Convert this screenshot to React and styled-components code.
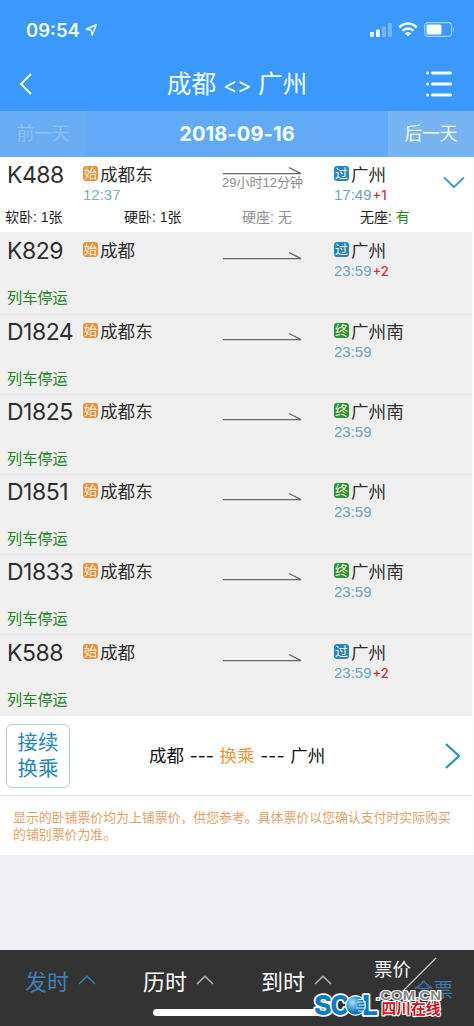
import React from "react";
import styled, { createGlobalStyle } from "styled-components";

const Global = createGlobalStyle`
  * { box-sizing: border-box; }
  body {
    margin: 0;
    background: #efeff4;
    font-family: "Liberation Sans", "Noto Sans CJK SC", sans-serif;
    color: #2e2e2e;
  }
`;

const Screen = styled.div`
  width: 474px;
  height: 1026px;
  display: flex;
  flex-direction: column;
  overflow: hidden;
  background: #efeff4;
  white-space: nowrap;
`;

const Header = styled.header`
  height: 111px;
  background: #3b98fc;
  color: #f1ffff;
`;

const StatusBar = styled.div`
  display: flex;
  align-items: center;
  height: 59px;
  padding: 0 19px 0 26px;
`;

const Clock = styled.span`
  font: 600 18.5px/24px Inter, sans-serif;
  width: 59px;
`;

const StatusIcons = styled.div`
  display: flex;
  align-items: center;
  gap: 6px;
  margin-left: auto;
`;

const NavBar = styled.div`
  display: grid;
  grid-template-columns: 60px 1fr 60px;
  align-items: center;
  height: 50px;
  svg { display: block; }
`;

const BackButton = styled.div`
  padding-left: 19px;
`;

const MenuButton = styled.div`
  padding-left: 12px;
`;

const Title = styled.h1`
  margin: 0;
  text-align: center;
  font: 400 24.7px/36px Inter, "Noto Sans CJK SC", sans-serif;
`;

const Arrows = styled.span`
  font-size: 22px;
  letter-spacing: -0.6px;
`;

const DateBar = styled.div`
  display: grid;
  grid-template-columns: 86px 1fr 86px;
  height: 46px;
  line-height: 47px;
  background: #62a9f6;
  text-align: center;
  color: #f4ffff;
`;

const DayButton = styled.div`
  font-size: 17.7px;
  background: ${(p) => (p.$off ? "#68adf4" : "#77b4f1")};
  color: ${(p) => (p.$off ? "#90c0f3" : "#effdff")};
`;

const CurrentDate = styled.div`
  font: 700 20px/47px Inter, sans-serif;
  letter-spacing: 0.1px;
`;

const List = styled.main`
  display: flex;
  flex-direction: column;
  padding-right: 2px;
  background: #fcfcfc;
`;

const TrainRow = styled.section`
  height: ${(p) => p.$h}px;
  padding-top: ${(p) => p.$top}px;
  background: ${(p) => (p.$open ? "#fff" : "#efefef")};
  border-bottom: 1px solid ${(p) => (p.$line ? "#e7e7e7" : "transparent")};
`;

const TrainMain = styled.div`
  display: grid;
  grid-template-columns: 76px 140px 111px 108px 1fr;
  padding-left: 7px;
  height: ${(p) => (p.$open ? 46 : 53)}px;
`;

const TrainNo = styled.div`
  font: 400 23px/34px Inter, sans-serif;
  letter-spacing: -0.5px;
`;

const Station = styled.div`
  display: flex;
  align-items: center;
  gap: 2px;
  height: 31px;
  font-size: 17.6px;
`;

const Badge = styled.span`
  width: 15px;
  height: 15px;
  border-radius: 3px;
  background: ${(p) => p.$color};
  color: #fff2dc;
  font-size: 13px;
  line-height: 15px;
  text-align: center;
`;

const Time = styled.div`
  margin-top: -3px;
  font-size: 15px;
  line-height: 17px;
  color: ${(p) => p.$tone};
`;

const PlusDay = styled.span`
  margin-left: 1px;
  font: 500 13px/12px Inter, sans-serif;
  color: #c9343f;
`;

const Route = styled.div`
  display: flex;
  flex-direction: column;
  align-items: flex-start;
  padding-top: ${(p) => (p.$open ? 8 : 17)}px;
  svg { display: block; }
`;

const Duration = styled.span`
  font-size: 13px;
  line-height: 15px;
  margin: 0 0 0 -1px;
  color: #8b8b8b;
`;

const Expand = styled.div`
  padding: 17px 0 0 1px;
`;

const Seats = styled.div`
  display: grid;
  grid-template-columns: 119px 118px 118px 1fr;
  padding-left: 5px;
  font-size: 14px;
  line-height: 27px;
  color: #222;
`;

const Seat = styled.span`
  color: ${(p) => (p.$none ? "#929292" : "#222")};
`;

const Available = styled.span`
  color: #268526;
`;

const Suspended = styled.div`
  padding-left: 7px;
  font-size: 15.2px;
  line-height: 22px;
  color: #258525;
`;

const TransferRow = styled.section`
  display: grid;
  grid-template-columns: 64px 1fr 27px;
  align-items: center;
  height: 80px;
  padding-left: 6px;
  background: #fff;
  border-bottom: 1px solid #e6e6e6;
`;

const TransferButton = styled.div`
  height: 64px;
  padding-top: 5px;
  border: 1px solid #b5cede;
  border-radius: 6px;
  font-size: 20.4px;
  line-height: 26px;
  text-align: center;
  color: #2787b7;
`;

const TransferRoute = styled.div`
  padding-left: 79px;
  font: 400 17.5px/26px Inter, "Noto Sans CJK SC", sans-serif;
  word-spacing: 0.8px;
  color: #111;
`;

const Orange = styled.span`
  color: #e49a43;
`;

const Note = styled.p`
  margin: 0;
  height: 59px;
  padding: 13px 0 0 13px;
  background: #fff;
  font-size: 12.88px;
  line-height: 17px;
  color: #dca36a;
`;

const SortBar = styled.footer`
  position: relative;
  display: grid;
  grid-template-columns: 118px 118px 118px 1fr;
  height: 76px;
  margin-top: auto;
  padding-left: 25px;
  background: #333;
`;

const SortItem = styled.div`
  display: flex;
  align-items: center;
  gap: 9px;
  height: 60px;
  font-size: 22px;
  color: ${(p) => (p.$active ? "#3f80b5" : "#fff")};
`;

const HomeIndicator = styled.div`
  position: absolute;
  left: 153px;
  bottom: 10px;
  width: 168px;
  height: 7px;
  border-radius: 4px;
  background: #fff;
`;

const PriceToggle = styled.div`
  position: relative;
  font-size: 18.5px;
  line-height: 24px;
  color: #f5f5f5;
`;

const PriceLabel = styled.span`
  position: absolute;
  left: -5px;
  top: 8px;
`;

const FullFare = styled.span`
  position: absolute;
  left: 35px;
  top: 28px;
  font-size: 19.5px;
  color: #3b78a9;
`;

const Slash = styled.svg`
  position: absolute;
  left: 23px;
  top: 7px;
`;

const Watermark = styled.svg`
  position: absolute;
  left: 309px;
  top: 34px;
`;

const ORANGE = "#e39243";
const BLUE = "#2686bf";
const GREEN = "#279436";

const trains = [
  { no: "K488", from: "成都东", dep: "12:37", pass: true, to: "广州", arr: "17:49", plus: "+1", open: true, h: 75, top: 1 },
  { no: "K829", from: "成都", pass: true, to: "广州", arr: "23:59", plus: "+2", h: 83, top: 2 },
  { no: "D1824", from: "成都东", to: "广州南", arr: "23:59", h: 80, top: 0 },
  { no: "D1825", from: "成都东", to: "广州南", arr: "23:59", h: 80, top: 0 },
  { no: "D1851", from: "成都东", to: "广州", arr: "23:59", h: 80, top: 0 },
  { no: "D1833", from: "成都东", to: "广州南", arr: "23:59", h: 80, top: 0 },
  { no: "K588", from: "成都", pass: true, to: "广州", arr: "23:59", plus: "+2", h: 81, top: 1, last: true },
];

const Caret = ({ color }) => (
  <svg width="18" height="10" viewBox="0 0 18 10" fill="none" stroke={color} strokeWidth="1.4">
    <path d="M1 9 9 1.2 17 9" />
  </svg>
);

function Train({ t }) {
  return (
    <TrainRow $h={t.h} $top={t.top} $open={t.open} $line={!t.last && !t.open}>
      <TrainMain $open={t.open}>
        <TrainNo>{t.no}</TrainNo>
        <div>
          <Station><Badge $color={ORANGE}>始</Badge>{t.from}</Station>
          {t.dep && <Time $tone="#83afb6">{t.dep}</Time>}
        </div>
        <Route $open={t.open}>
          <svg width="80" height="9" viewBox="0 0 80 9" fill="none" stroke="#666" strokeWidth="1.3">
            <path d="M0 7.6H78L66 1.5" />
          </svg>
          {t.open && <Duration>29小时12分钟</Duration>}
        </Route>
        <div>
          <Station><Badge $color={t.pass ? BLUE : GREEN}>{t.pass ? "过" : "终"}</Badge>{t.to}</Station>
          <Time $tone="#6ea3c0">{t.arr}{t.plus && <PlusDay>{t.plus}</PlusDay>}</Time>
        </div>
        {t.open && (
          <Expand>
            <svg width="22" height="13" viewBox="0 0 22 13" fill="none" stroke="#4b9bc5" strokeWidth="2">
              <path d="M1 1.5 11 11 21 1.5" />
            </svg>
          </Expand>
        )}
      </TrainMain>
      {t.open ? (
        <Seats>
          <Seat>软卧: 1张</Seat>
          <Seat>硬卧: 1张</Seat>
          <Seat $none>硬座: 无</Seat>
          <Seat>无座: <Available>有</Available></Seat>
        </Seats>
      ) : (
        <Suspended>列车停运</Suspended>
      )}
    </TrainRow>
  );
}

function Logo() {
  const outline = { stroke: "#fff", strokeLinejoin: "round", paintOrder: "stroke" };
  return (
    <Watermark width="140" height="42" viewBox="0 0 140 42">
      <defs>
        <radialGradient id="globe" cx="35%" cy="35%">
          <stop offset="0" stopColor="#a9def8" />
          <stop offset="1" stopColor="#0874be" />
        </radialGradient>
      </defs>
      <g fontFamily="Inter" fontWeight="800" fontSize="27" fill="#087cc4" strokeWidth="3.4" {...outline}>
        <text x="5" y="31" textLength="18" lengthAdjust="spacingAndGlyphs">S</text>
        <text x="21.5" y="31" textLength="19" lengthAdjust="spacingAndGlyphs">C</text>
        <text x="53" y="31" textLength="16" lengthAdjust="spacingAndGlyphs">L</text>
      </g>
      <circle cx="46.5" cy="21.5" r="9.8" fill="url(#globe)" stroke="#fff" strokeWidth="1.2" />
      <path d="M49 15.5h6M48 18h9M50 21h7M47 24h10M49 27h6" stroke="#d2edf9" strokeWidth="1" />
      <text x="67" y="15.5" textLength="65" lengthAdjust="spacingAndGlyphs" fontFamily="Liberation Sans" fontWeight="700" fontSize="12" fill="#858585" strokeWidth="2" {...outline}>.COM.CN</text>
      <text x="72.5" y="29.5" textLength="59" lengthAdjust="spacingAndGlyphs" fontFamily="Noto Sans CJK SC" fontWeight="700" fontSize="14.8" fill="#d01525" strokeWidth="2.4" {...outline}>四川在线</text>
    </Watermark>
  );
}

export default function App() {
  return (
    <Screen>
      <Global />
      <Header>
        <StatusBar>
          <Clock>09:54</Clock>
          <svg width="14" height="14" viewBox="0 0 14 14" fill="none" stroke="#e7ffff" strokeWidth="1.5" strokeLinejoin="round">
            <path d="M11.3 1.8 1.2 6.2 6.2 7.1 7.1 12Z" />
          </svg>
          <StatusIcons>
            <svg width="22" height="14" viewBox="0 0 22 14" fill="#f1ffff">
              <rect y="9" width="4" height="5" rx="1" />
              <rect x="6" y="6.5" width="4" height="7.5" rx="1" />
              <rect x="12" y="3.5" width="4" height="10.5" rx="1" opacity=".3" />
              <rect x="18" y="0" width="4" height="14" rx="1" opacity=".3" />
            </svg>
            <svg width="20" height="15" viewBox="0 0 20 15" fill="none" stroke="#f1ffff" strokeWidth="2.6">
              <path d="M1.2 5.2Q10-2.2 18.8 5.2M4.5 8.8Q10 4.2 15.5 8.8" />
              <path d="M10 14.5 6.8 11.2Q10 8.8 13.2 11.2Z" fill="#f1ffff" stroke="none" />
            </svg>
            <svg width="31" height="15" viewBox="0 0 31 15">
              <rect x=".6" y=".6" width="27" height="13.8" rx="3.5" fill="none" stroke="#a2d1ff" strokeWidth="1.1" />
              <rect x="2.5" y="2.5" width="15" height="10" rx="1.5" fill="#f7ffff" />
              <path d="M29 5q2 2.5 0 5Z" fill="#a2d1ff" />
            </svg>
          </StatusIcons>
        </StatusBar>
        <NavBar>
          <BackButton>
            <svg width="14" height="22" viewBox="0 0 14 22" fill="none" stroke="#efffff" strokeWidth="2">
              <path d="M12 1 2 11 12 21" />
            </svg>
          </BackButton>
          <Title>成都 <Arrows>&lt;&gt;</Arrows> 广州</Title>
          <MenuButton>
            <svg width="26" height="28" viewBox="0 0 26 28" stroke="#f1ffff" strokeWidth="3" strokeLinecap="round">
              <path d="M6.5 3H24.5M6.5 14H24.5M6.5 25H24.5M1.6 3h.01M1.6 14h.01M1.6 25h.01" />
            </svg>
          </MenuButton>
        </NavBar>
      </Header>
      <DateBar>
        <DayButton $off>前一天</DayButton>
        <CurrentDate>2018-09-16</CurrentDate>
        <DayButton>后一天</DayButton>
      </DateBar>
      <List>
        {trains.map((t) => <Train key={t.no} t={t} />)}
        <TransferRow>
          <TransferButton>接续<br />换乘</TransferButton>
          <TransferRoute>成都 --- <Orange>换乘</Orange> --- 广州</TransferRoute>
          <svg width="16" height="28" viewBox="0 0 16 28" fill="none" stroke="#2f8fbd" strokeWidth="2.2">
            <path d="M1 2 14 14 1 26" />
          </svg>
        </TransferRow>
        <Note>显示的卧铺票价均为上铺票价，供您参考。具体票价以您确认支付时实际购买<br />的铺别票价为准。</Note>
      </List>
      <SortBar>
        <SortItem $active>发时<Caret color="#3f80b5" /></SortItem>
        <SortItem>历时<Caret color="#bbb" /></SortItem>
        <SortItem>到时<Caret color="#bbb" /></SortItem>
        <PriceToggle>
          <PriceLabel>票价</PriceLabel>
          <Slash width="36" height="36" viewBox="0 0 36 36" stroke="#c4c4c4" strokeWidth="1.3">
            <path d="M34 1 1 34" />
          </Slash>
          <FullFare>全票</FullFare>
        </PriceToggle>
        <HomeIndicator />
        <Logo />
      </SortBar>
    </Screen>
  );
}
